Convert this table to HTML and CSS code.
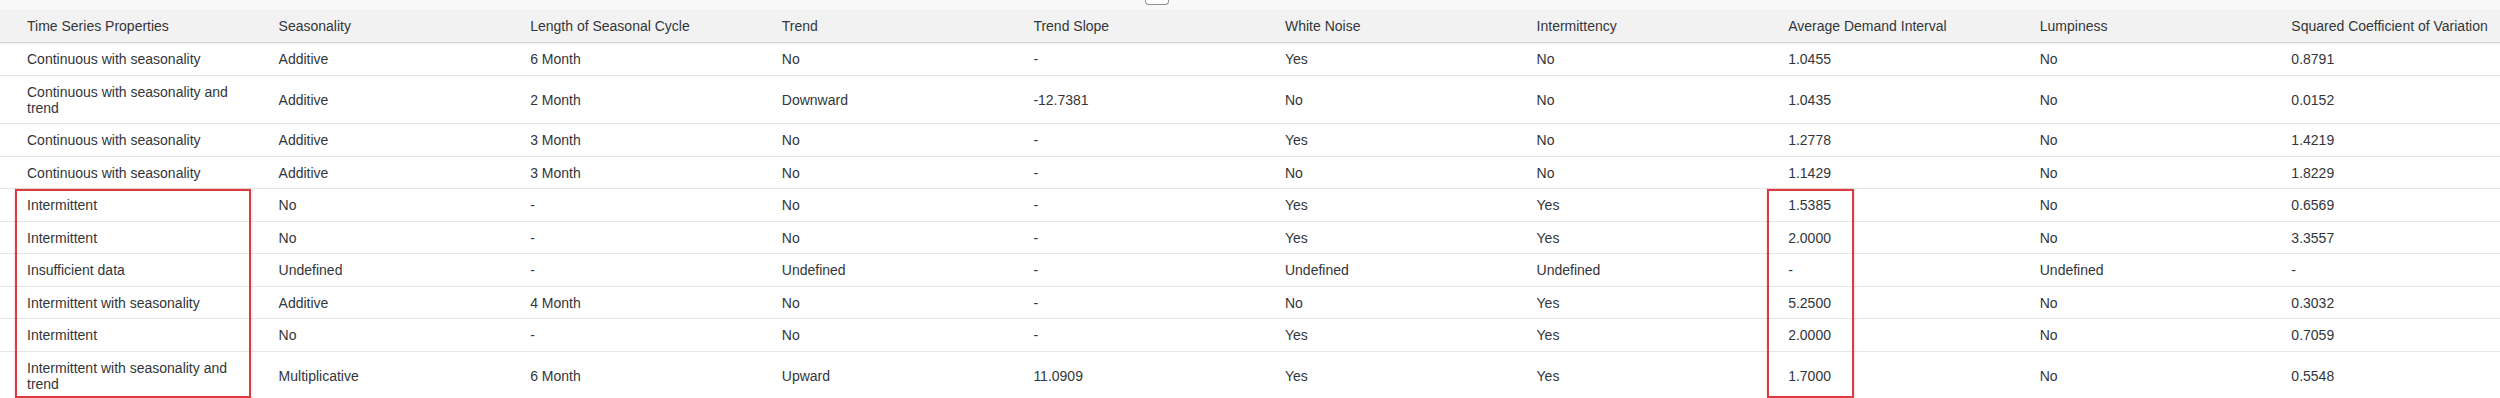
FILE: index.html
```html
<!DOCTYPE html>
<html lang="en">
<head>
<meta charset="utf-8">
<title>Time Series Properties</title>
<link rel="stylesheet" href="styles.css">
</head>
<body>
<div class="page">
  <div class="topbar"><span class="tab-btn"></span></div>
  <div class="table">
    <div class="row head">
      <div class="cell">Time Series Properties</div>
      <div class="cell">Seasonality</div>
      <div class="cell">Length of Seasonal Cycle</div>
      <div class="cell">Trend</div>
      <div class="cell">Trend Slope</div>
      <div class="cell">White Noise</div>
      <div class="cell">Intermittency</div>
      <div class="cell">Average Demand Interval</div>
      <div class="cell">Lumpiness</div>
      <div class="cell">Squared Coefficient of Variation</div>
    </div>
    <div class="row">
      <div class="cell">Continuous with seasonality</div><div class="cell">Additive</div><div class="cell">6 Month</div><div class="cell">No</div><div class="cell">-</div><div class="cell">Yes</div><div class="cell">No</div><div class="cell">1.0455</div><div class="cell">No</div><div class="cell">0.8791</div>
    </div>
    <div class="row">
      <div class="cell">Continuous with seasonality and trend</div><div class="cell">Additive</div><div class="cell">2 Month</div><div class="cell">Downward</div><div class="cell">-12.7381</div><div class="cell">No</div><div class="cell">No</div><div class="cell">1.0435</div><div class="cell">No</div><div class="cell">0.0152</div>
    </div>
    <div class="row">
      <div class="cell">Continuous with seasonality</div><div class="cell">Additive</div><div class="cell">3 Month</div><div class="cell">No</div><div class="cell">-</div><div class="cell">Yes</div><div class="cell">No</div><div class="cell">1.2778</div><div class="cell">No</div><div class="cell">1.4219</div>
    </div>
    <div class="row">
      <div class="cell">Continuous with seasonality</div><div class="cell">Additive</div><div class="cell">3 Month</div><div class="cell">No</div><div class="cell">-</div><div class="cell">No</div><div class="cell">No</div><div class="cell">1.1429</div><div class="cell">No</div><div class="cell">1.8229</div>
    </div>
    <div class="row">
      <div class="cell">Intermittent</div><div class="cell">No</div><div class="cell">-</div><div class="cell">No</div><div class="cell">-</div><div class="cell">Yes</div><div class="cell">Yes</div><div class="cell">1.5385</div><div class="cell">No</div><div class="cell">0.6569</div>
    </div>
    <div class="row">
      <div class="cell">Intermittent</div><div class="cell">No</div><div class="cell">-</div><div class="cell">No</div><div class="cell">-</div><div class="cell">Yes</div><div class="cell">Yes</div><div class="cell">2.0000</div><div class="cell">No</div><div class="cell">3.3557</div>
    </div>
    <div class="row">
      <div class="cell">Insufficient data</div><div class="cell">Undefined</div><div class="cell">-</div><div class="cell">Undefined</div><div class="cell">-</div><div class="cell">Undefined</div><div class="cell">Undefined</div><div class="cell">-</div><div class="cell">Undefined</div><div class="cell">-</div>
    </div>
    <div class="row">
      <div class="cell">Intermittent with seasonality</div><div class="cell">Additive</div><div class="cell">4 Month</div><div class="cell">No</div><div class="cell">-</div><div class="cell">No</div><div class="cell">Yes</div><div class="cell">5.2500</div><div class="cell">No</div><div class="cell">0.3032</div>
    </div>
    <div class="row">
      <div class="cell">Intermittent</div><div class="cell">No</div><div class="cell">-</div><div class="cell">No</div><div class="cell">-</div><div class="cell">Yes</div><div class="cell">Yes</div><div class="cell">2.0000</div><div class="cell">No</div><div class="cell">0.7059</div>
    </div>
    <div class="row">
      <div class="cell">Intermittent with seasonality and trend</div><div class="cell">Multiplicative</div><div class="cell">6 Month</div><div class="cell">Upward</div><div class="cell">11.0909</div><div class="cell">Yes</div><div class="cell">Yes</div><div class="cell">1.7000</div><div class="cell">No</div><div class="cell">0.5548</div>
    </div>
    <div class="mark mark-props"></div>
    <div class="mark mark-adi"></div>
  </div>
</div>
</body>
</html>
```
FILE: styles.css
```css
html, body {
  margin: 0;
  padding: 0;
  background: #ffffff;
  overflow: hidden;
}

.page {
  width: 2500px;
  height: 398px;
  overflow: hidden;
  font-family: "Liberation Sans", Arial, sans-serif;
  font-size: 14px;
  color: #32363a;
}

.topbar {
  height: 9px;
  background: #f8f8f8;
  display: flex;
  align-items: flex-start;
}

.tab-btn {
  display: block;
  margin-left: 1145px;
  width: 22px;
  height: 4px;
  background: #ffffff;
  border: 1px solid #8d9196;
  border-top: none;
  border-radius: 0 0 4px 4px;
}

.table {
  position: relative;
  width: 2516px;
}

.row {
  display: grid;
  grid-template-columns: repeat(10, 251.6px);
  border-bottom: 1px solid #e6e6e6;
  align-items: center;
}

.row.head {
  background: #f2f2f2;
  border-bottom: 1px solid #d3d3d3;
  box-shadow: 0 1px 1px rgba(0, 0, 0, 0.05);
}

.cell {
  padding: 8px 16px 7.5px 27px;
  line-height: 16px;
  white-space: normal;
}

.row.head .cell {
  padding-top: 8.5px;
  padding-bottom: 8.5px;
}

.mark {
  position: absolute;
  top: 180px;
  height: 209px;
  border: 2px solid #dc3c3f;
  box-sizing: border-box;
  box-shadow: 0 0 2px rgba(220, 60, 63, 0.35);
}

.mark-props {
  left: 15px;
  width: 236px;
}

.mark-adi {
  left: 1767px;
  width: 87px;
}
```
